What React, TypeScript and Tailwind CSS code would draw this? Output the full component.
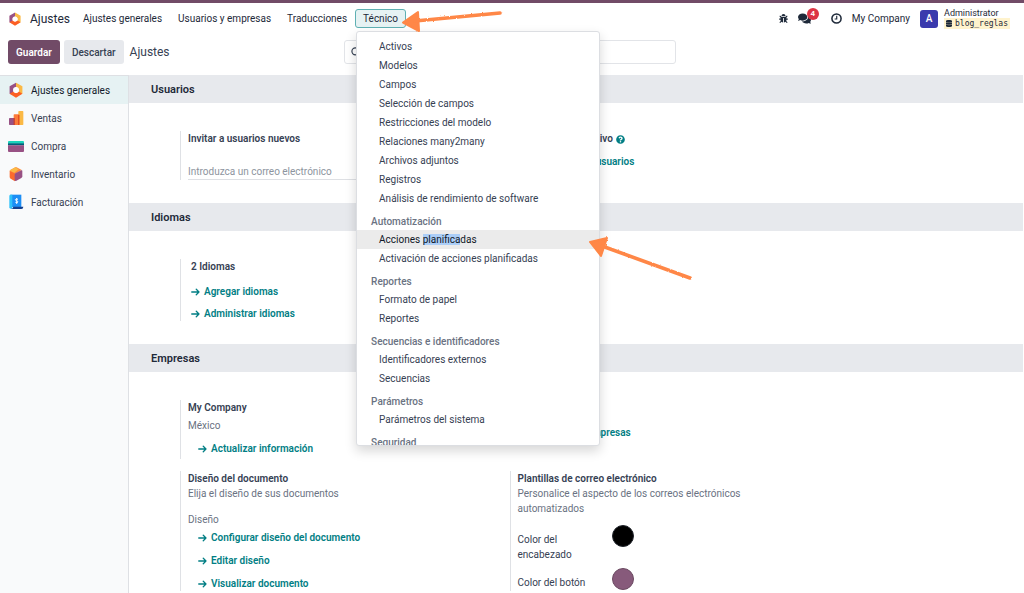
import type { ReactNode } from "react";
import { FaBug, FaComments, FaDatabase, FaQuestionCircle, FaUsers } from "react-icons/fa";

function SettingsLogo({ className }: { className: string }) {
  return (
    <svg viewBox="0 0 50 50" className={className} aria-hidden="true">
      <path d="M25 2 5 13v24l11 4 1-19 8-6z" fill="#985184" />
      <path d="M25 2 45 13v24l-10 4-1-19-9-6z" fill="#fbb945" />
      <path d="m5 37 12-7 8 5 9-5 11 7-20 12z" fill="#fc5f24" />
      <circle cx="25" cy="25" r="9" fill="#fff" />
    </svg>
  );
}

function SalesLogo() {
  return (
    <svg viewBox="0 0 48 48" className="h-4 w-4" aria-hidden="true">
      <rect x="31" y="3" width="15" height="42" rx="2" fill="#fbb945" />
      <rect x="17" y="13" width="17" height="32" rx="2" fill="#fc7b38" />
      <rect x="3" y="24" width="17" height="21" rx="2" fill="#985184" />
      <path d="M17 24h3v21h-3zM31 15h3v30h-3z" fill="#d83a18" />
    </svg>
  );
}

function PurchaseLogo() {
  return (
    <svg viewBox="0 0 48 33" className="h-[11px] w-4" aria-hidden="true">
      <path d="M0 3q0-3 3-3h42q3 0 3 3v5H0z" fill="#1ad3bb" />
      <path d="M0 7h48v6H0z" fill="#005e7a" />
      <path d="M0 13h48v17q0 3-3 3H3q-3 0-3-3z" fill="#985184" />
    </svg>
  );
}

function InventoryLogo() {
  return (
    <svg viewBox="0 0 48 48" className="h-4 w-4" aria-hidden="true">
      <path d="M22 4q2-1 4 0l15 8-19 11L7 12z" fill="#fc8a3f" />
      <path d="M22 4 7 12q-2 1-2 4l12 6 15-12z" fill="#fbb945" />
      <path d="M5 14 21 22v24L8 38q-3-2-3-5z" fill="#fc6b2d" />
      <path d="M43 15q0-3-3-2L22 22q-2 1-2 4v16q0 4 4 3l16-9q3-2 3-5z" fill="#985184" />
    </svg>
  );
}

function InvoiceLogo() {
  return (
    <svg viewBox="0 0 48 48" className="h-4 w-4" aria-hidden="true">
      <path d="M7 2h33v37H7z" fill="#1c8ef5" />
      <path d="M4 6q0-4 4-4h5v42H8q-4 0-4-4z" fill="#2ec1fa" />
      <path d="M16 38h30q0 7-6 7H9q7-1 7-7z" fill="#14408e" />
      <path d="M30 16q-7-3-8 1c0 4 8 3 8 7q-1 4-8 1M26 12v18" fill="none" stroke="#fff" strokeWidth="2.600" />
    </svg>
  );
}

function ClockIcon() {
  return (
    <svg viewBox="0 0 24 24" className="h-[11px] w-[11px]" fill="none" stroke="currentColor" strokeWidth="3.400" aria-hidden="true">
      <circle cx="12" cy="12" r="10" />
      <path d="M12.500 6v7H8" strokeWidth="2.500" />
    </svg>
  );
}

function SearchIcon() {
  return (
    <svg viewBox="0 0 24 24" className="h-[11px] w-[11px] shrink-0" fill="none" stroke="currentColor" strokeWidth="2.600" strokeLinecap="round" aria-hidden="true">
      <circle cx="9.500" cy="9.500" r="7.500" />
      <path d="m15.500 15.500 6.500 6.500" />
    </svg>
  );
}

function ArrowIcon() {
  return (
    <svg viewBox="0 0 18 16" className="h-2 w-[9px] shrink-0" fill="none" stroke="currentColor" strokeWidth="2.600" strokeLinecap="round" strokeLinejoin="round" aria-hidden="true">
      <path d="M1.500 8H16M10.500 2.500 16 8l-5.500 5.500" />
    </svg>
  );
}

function ActionLink({ children }: { children: ReactNode }) {
  return (
    <a href="#" className="flex items-center gap-1 self-start pt-px font-semibold leading-[15px] text-[#017e84]">
      <ArrowIcon />
      {children}
    </a>
  );
}

function Block({ title, children }: { title: string; children: ReactNode }) {
  return (
    <section>
      <h2 className="bg-[#e7e9ed] pl-[22px] pt-px text-[11px] font-semibold leading-[27px] text-gray-800">{title}</h2>
      <div className="grid max-w-[710px] grid-cols-2 gap-y-3 pb-[23px] pl-[51px] pt-7">{children}</div>
    </section>
  );
}

function Setting({ bordered = true, children }: { bordered?: boolean; children: ReactNode }) {
  return (
    <div className={bordered ? "flex flex-col border-l border-[#dfe1e5] pl-[7px]" : "flex flex-col border-l border-transparent pl-[7px]"}>
      {children}
    </div>
  );
}

const apps = [
  { name: "Ajustes generales", icon: <SettingsLogo className="h-4 w-4" />, active: true },
  { name: "Ventas", icon: <SalesLogo />, active: false },
  { name: "Compra", icon: <PurchaseLogo />, active: false },
  { name: "Inventario", icon: <InventoryLogo />, active: false },
  { name: "Facturación", icon: <InvoiceLogo />, active: false },
];

const menu: { title?: string; items: string[] }[] = [
  {
    items: [
      "Activos",
      "Modelos",
      "Campos",
      "Selección de campos",
      "Restricciones del modelo",
      "Relaciones many2many",
      "Archivos adjuntos",
      "Registros",
      "Análisis de rendimiento de software",
    ],
  },
  { title: "Automatización", items: ["Acciones planificadas", "Activación de acciones planificadas"] },
  { title: "Reportes", items: ["Formato de papel", "Reportes"] },
  { title: "Secuencias e identificadores", items: ["Identificadores externos", "Secuencias"] },
  { title: "Parámetros", items: ["Parámetros del sistema"] },
  { title: "Seguridad", items: [] },
];

function TechnicalMenu() {
  return (
    <div className="absolute left-px top-full z-20 mt-[3px] max-h-[415px] w-[244px] overflow-hidden rounded-[3px] border border-[#dcdee2] bg-white pt-[5px] shadow-[0_5px_12px_rgba(0,0,0,0.16)]">
      {menu.map((group) => (
        <div key={group.title ?? "base"}>
          {group.title && <div className="pl-[14px] pt-[6px] font-medium leading-4 text-gray-500">{group.title}</div>}
          {group.items.map((item) =>
            item === "Acciones planificadas" ? (
              <a key={item} href="#" className="block bg-[#ebebeb] pl-[22px] leading-[19px] text-gray-900">
                Acciones <span className="bg-[#accef7]">planifica</span>das
              </a>
            ) : (
              <a key={item} href="#" className="block pl-[22px] leading-[19px] text-gray-700">
                {item}
              </a>
            ),
          )}
        </div>
      ))}
    </div>
  );
}

function Annotations() {
  return (
    <svg viewBox="0 0 300 280" className="pointer-events-none absolute left-[395px] top-0 z-30 h-[280px] w-[300px]" aria-hidden="true">
      <defs>
        <filter id="crayon" x="-5%" y="-5%" width="110%" height="110%">
          <feTurbulence type="fractalNoise" baseFrequency="0.45" numOctaves="2" seed="4" result="n" />
          <feDisplacementMap in="SourceGraphic" in2="n" scale="2" />
        </filter>
      </defs>
      <g filter="url(#crayon)" fill="#ff8746" stroke="#ff8746" strokeLinejoin="round" strokeLinecap="round">
        <path d="M8 22.500 23 12 24 31z" strokeWidth="2" />
        <path d="M20 21 105 13" strokeWidth="3.600" />
        <path d="M195 242 212 238 206 256z" strokeWidth="2" />
        <path d="M207 246 295 278" strokeWidth="3.600" />
      </g>
    </svg>
  );
}

export default function App() {
  return (
    <div className="relative flex h-screen flex-col overflow-hidden bg-white font-[Roboto,'Liberation_Sans',sans-serif] text-[10px] text-gray-700">
      <header className="flex h-[34px] shrink-0 items-center border-t-[3px] border-[#714b67] pl-2 pr-[14px] text-gray-800">
        <SettingsLogo className="h-4 w-[14px]" />
        <a href="#" className="ml-2 text-[12px]">Ajustes</a>
        <nav className="ml-[5px] flex items-center">
          <a href="#" className="px-2">Ajustes generales</a>
          <a href="#" className="px-2">Usuarios y empresas</a>
          <a href="#" className="px-2">Traducciones</a>
          <div className="relative">
            <button type="button" className="block h-[19px] rounded-[3px] border border-[#5fb0b3] bg-[#e6f2f3] px-[7px]">Técnico</button>
            <TechnicalMenu />
          </div>
        </nav>
        <div className="ml-auto flex items-center">
          <button type="button" aria-label="Depurar"><FaBug className="h-[9px] w-[9px]" /></button>
          <button type="button" aria-label="Mensajes" className="relative ml-[10px]">
            <FaComments className="h-[13px] w-[13px]" />
            <span className="absolute -top-1 left-[9px] h-3 w-3 rounded-full bg-[#dc3545] text-center text-[8px] font-semibold leading-3 text-white">4</span>
          </button>
          <button type="button" aria-label="Actividades" className="ml-[20px]"><ClockIcon /></button>
          <button type="button" className="ml-[10px]">My Company</button>
          <button type="button" className="ml-[10px] flex items-center gap-[6px] text-left">
            <span className="h-[18px] w-[18px] rounded-[3px] bg-[#3a3aad] text-center font-medium leading-[18px] text-white">A</span>
            <span className="flex flex-col text-[9px] leading-[9px]">
              <span>Administrator</span>
              <span className="flex items-center gap-[3px] bg-[#fff3cd] px-[2px] font-['DejaVu_Sans_Mono',monospace] text-[8px] leading-[11px]">
                <FaDatabase className="h-[7px] w-[6px]" />
                blog_reglas
              </span>
            </span>
          </button>
        </div>
      </header>

      <div className="flex h-[41px] shrink-0 items-center pb-[5px] pl-2">
        <button type="button" className="h-6 rounded-[3px] bg-[#714b67] px-2 font-semibold text-white">Guardar</button>
        <button type="button" className="ml-1 h-6 rounded-[3px] bg-[#e7e9ed] px-2 font-medium">Descartar</button>
        <h1 className="ml-[6px] w-[214px] text-[12px]">Ajustes</h1>
        <label className="flex h-6 w-[332px] items-center rounded-[3px] border border-[#e2e4e8] px-[6px]">
          <SearchIcon />
          <input type="text" aria-label="Buscar" className="ml-2 min-w-0 flex-1 outline-none" />
        </label>
      </div>

      <div className="flex min-h-0 flex-1">
        <aside className="w-[129px] shrink-0 border-r border-t border-[#dee0e4] bg-[#f9fafb]">
          {apps.map((app) => (
            <a
              key={app.name}
              href="#"
              className={app.active ? "flex h-7 items-center gap-[7px] bg-[#e6f2f3] pl-2 text-gray-900" : "flex h-7 items-center gap-[7px] pl-2"}
            >
              {app.icon}
              {app.name}
            </a>
          ))}
        </aside>

        <main className="mr-px min-w-0 flex-1 overflow-hidden bg-white">
          <Block title="Usuarios">
            <Setting>
              <label htmlFor="invite" className="font-semibold leading-4">Invitar a usuarios nuevos</label>
              <input
                id="invite"
                type="text"
                placeholder="Introduzca un correo electrónico"
                className="mt-4 h-[17px] w-full border-b border-[#dee0e4] outline-none placeholder:text-[#8d949e]"
              />
            </Setting>
            <Setting bordered={false}>
              <div className="flex items-center font-semibold leading-4">
                <FaUsers className="mr-[11px] h-3 w-3" />
                1 Usuario activo
                <FaQuestionCircle className="ml-[3px] h-[9px] w-[9px] text-[#017e84]" />
              </div>
              <div className="mt-[6px] flex pl-[10px]"><ActionLink>Administrar usuarios</ActionLink></div>
            </Setting>
          </Block>

          <Block title="Idiomas">
            <Setting>
              <div className="flex flex-col gap-[6px] pl-[3px]">
                <span className="pb-[2px] font-semibold leading-4">2 Idiomas</span>
                <ActionLink>Agregar idiomas</ActionLink>
                <ActionLink>Administrar idiomas</ActionLink>
              </div>
            </Setting>
          </Block>

          <Block title="Empresas">
            <Setting>
              <span className="font-semibold leading-4">My Company</span>
              <span className="mt-[2px] leading-4 text-gray-500">México</span>
              <div className="mb-[3px] mt-[6px] flex pl-[10px]"><ActionLink>Actualizar información</ActionLink></div>
            </Setting>
            <Setting bordered={false}>
              <div className="mt-6 flex pl-[10px]"><ActionLink>Gestionar empresas</ActionLink></div>
            </Setting>
            <Setting>
              <span className="font-semibold leading-[15px]">Diseño del documento</span>
              <span className="leading-[15px] text-gray-500">Elija el diseño de sus documentos</span>
              <span className="mt-[11px] leading-[15px] text-gray-500">Diseño</span>
              <div className="mt-[2px] flex flex-col gap-[7px] pl-[10px]">
                <ActionLink>Configurar diseño del documento</ActionLink>
                <ActionLink>Editar diseño</ActionLink>
                <ActionLink>Visualizar documento</ActionLink>
              </div>
            </Setting>
            <Setting>
              <span className="font-semibold leading-[15px]">Plantillas de correo electrónico</span>
              <p className="max-w-[240px] leading-[15px] text-gray-500">Personalice el aspecto de los correos electrónicos automatizados</p>
              <div className="mt-[9px] flex items-start">
                <span className="w-[94px] pr-4 pt-[7px] leading-[15px]">Color del encabezado</span>
                <button type="button" aria-label="Color del encabezado" className="h-[22px] w-[22px] rounded-full border border-[#20242b] bg-black" />
              </div>
              <div className="mt-[6px] flex items-start">
                <span className="w-[94px] pt-[7px] leading-[15px]">Color del botón</span>
                <button type="button" aria-label="Color del botón" className="h-[22px] w-[22px] rounded-full border border-[#6b4a62] bg-[#875a7b]" />
              </div>
            </Setting>
          </Block>
        </main>
      </div>

      <Annotations />
    </div>
  );
}
